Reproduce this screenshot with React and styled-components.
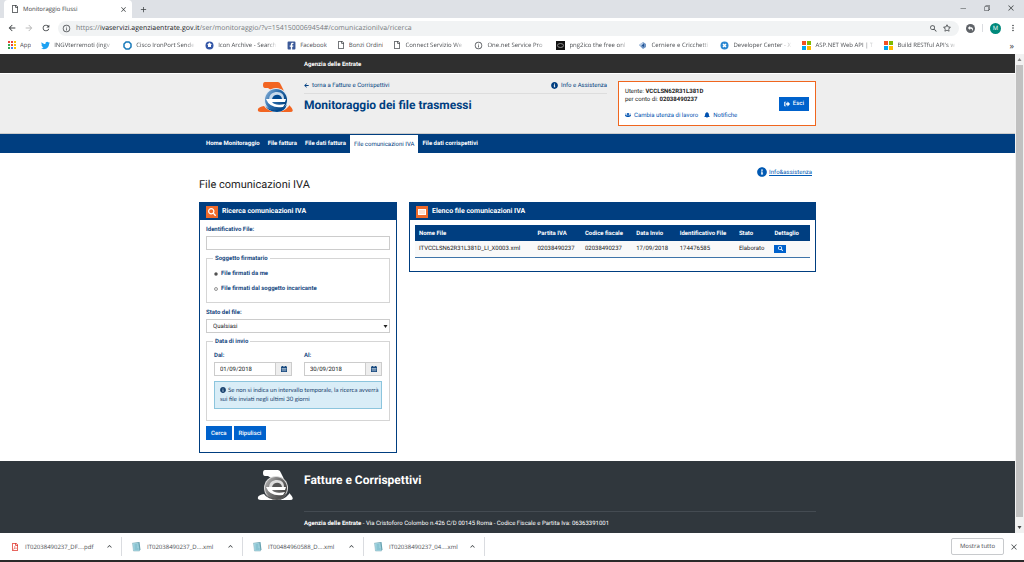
import React, { useState } from 'react';
import styled, { createGlobalStyle } from 'styled-components';
import {
  FaArrowLeft, FaInfoCircle, FaUsers, FaBell, FaSignOutAlt, FaSearch,
  FaTwitter, FaFacebookSquare, FaRegFile, FaRegFilePdf, FaRegStar, FaReply,
} from 'react-icons/fa';
import { VscChromeMinimize, VscChromeRestore, VscChromeClose } from 'react-icons/vsc';
import { MdArrowBack, MdArrowForward, MdRefresh, MdAdd, MdMoreVert, MdInfoOutline, MdSearch, MdKeyboardArrowUp } from 'react-icons/md';

const GlobalStyle = createGlobalStyle`
  * { box-sizing: border-box; }
  body {
    margin: 0;
    font-family: Roboto, "Liberation Sans", sans-serif;
    font-size: 6px;
    line-height: 9px;
    color: #222;
    background: #fff;
    text-rendering: geometricPrecision;
  }
  button, input, select { font: inherit; color: inherit; margin: 0; text-rendering: inherit; }
  a { text-decoration: none; color: inherit; }
  svg { flex: none; display: block; }
`;

const Window = styled.div`
  height: 100vh;
  display: flex;
  flex-direction: column;
  overflow: hidden;
`;

/* ---- browser ---- */

const Chrome = styled.header`
  flex: none;
  font-family: "Open Sans", "Noto Sans", sans-serif;
  color: #4a4d51;
`;

const TabStrip = styled.div`
  height: 18px;
  display: flex;
  align-items: center;
  background: #dee1e6;
  padding: 0 4px;
`;

const Tab = styled.div`
  align-self: stretch;
  width: 128px;
  display: flex;
  align-items: center;
  gap: 4px;
  padding: 0 5px 0 7px;
  background: #fff;
  border-radius: 4px 4px 0 0;
  color: #3c4043;
  font-size: 6px;
`;

const TabTitle = styled.span`
  flex: 1;
`;

const IconButton = styled.button`
  display: flex;
  align-items: center;
  justify-content: center;
  padding: 0;
  border: 0;
  background: none;
  color: ${({ $color }) => $color || '#3c4043'};
  font-size: ${({ $size }) => $size || 9}px;
`;

const NewTab = styled.div`
  flex: 1;
  padding-left: 7px;
  display: flex;
`;

const WindowButtons = styled.div`
  display: flex;
  gap: 16px;
  align-self: flex-start;
  padding: 4px 5px 0 0;
`;

const Toolbar = styled.div`
  height: 19px;
  display: flex;
  align-items: center;
  padding: 1px 6px 0 7px;
  gap: 7px;
`;

const Address = styled.div`
  flex: 1;
  height: 15px;
  display: flex;
  align-items: center;
  gap: 5px;
  padding: 0 8px 0 4px;
  border-radius: 8px;
  background: #f1f3f4;
  font-size: 7px;
`;

const Url = styled.span`
  flex: 1;
  color: #777b80;
  b { font-weight: 400; color: #202124; }
`;

const Divider = styled.span`
  width: 1px;
  height: 8px;
  background: #dadce0;
`;

const Avatar = styled.button`
  width: 11px;
  height: 11px;
  display: flex;
  align-items: center;
  justify-content: center;
  padding: 0;
  border: 0;
  border-radius: 50%;
  background: #00897b;
  color: #fff;
  font-size: 6px;
`;

const ExtensionButton = styled(Avatar)`
  width: 9px;
  height: 9px;
  background: #5f6368;
`;

const Bookmarks = styled.nav`
  height: 17px;
  display: flex;
  align-items: center;
  gap: 10px;
  padding: 0 10px 1px 8px;
  font-size: 6px;
  white-space: nowrap;
`;

const Bookmark = styled.a`
  display: flex;
  align-items: center;
  gap: 4px;
  span {
    overflow: hidden;
    width: ${({ $cut }) => ($cut ? '59px' : 'auto')};
    mask-image: ${({ $cut }) => ($cut ? 'linear-gradient(90deg, #000 85%, transparent)' : 'none')};
  }
`;

const More = styled.button`
  margin-left: auto;
  padding: 0;
  border: 0;
  background: none;
  color: #3c4043;
  font-size: 9px;
`;

const Viewport = styled.div`
  flex: 1;
  min-height: 0;
  display: flex;
`;

const Page = styled.div`
  flex: 1;
  display: flex;
  flex-direction: column;
  overflow: hidden;
`;

const Scrollbar = styled.div`
  width: 9px;
  display: flex;
  flex-direction: column;
  align-items: center;
  justify-content: space-between;
  padding: 3px 0;
  gap: 3px;
  background: #f1f1f1;
`;

const Thumb = styled.div`
  flex: 1;
  width: 7px;
  margin-bottom: 5px;
  background: #c1c1c1;
`;

const Downloads = styled.footer`
  flex: none;
  height: 27px;
  display: flex;
  align-items: center;
  padding: 0 6px 0 1px;
  background: #fff;
  color: #4a4d51;
  font-family: "Open Sans", "Noto Sans", sans-serif;
  font-size: 6px;
`;

const Download = styled.div`
  width: 121px;
  height: 19px;
  display: flex;
  align-items: center;
  gap: 6px;
  padding: 0 7px 0 10px;
  border-right: 1px solid #dadce0;
  span { flex: 1; padding-top: 2px; }
`;

const ShowAll = styled.button`
  margin-left: auto;
  margin-right: 6px;
  height: 17px;
  padding: 0 8px;
  border: 1px solid #c8cacd;
  border-radius: 2px;
  background: #fff;
`;

const Taskbar = styled.div`
  flex: none;
  height: 2px;
  background: #2a2a2a;
`;

/* ---- page ---- */

const Container = styled.div`
  width: 100%;
  max-width: 617px;
  margin: 0 auto;
`;

const TopBar = styled.div`
  height: 19px;
  flex: none;
  background: #2f2f2f;
  color: #fff;
  font-weight: 700;
  line-height: 21px;
  ${Container} { padding-left: 105px; }
`;

const Header = styled.header`
  height: 61px;
  flex: none;
  background: #eee;
  border-top: 1px solid #fff;
  border-bottom: 1px solid #ccc;
  ${Container} {
    display: flex;
    padding-top: 7px;
  }
`;

const LogoCell = styled.div`
  flex: none;
  width: 105px;
  padding-left: 58px;
`;

const Heading = styled.div`
  flex: 1;
  margin-right: 11px;
  color: #003e80;
`;

const HeadLinks = styled.div`
  display: flex;
  justify-content: space-between;
  padding-bottom: 3px;
  border-bottom: 1px solid #ddd;
`;

const IconLink = styled.a`
  display: inline-flex;
  align-items: center;
  gap: 3px;
  color: ${({ $color }) => $color || '#003e80'};
`;

const AppTitle = styled.h2`
  margin: 3px 0 0;
  font-size: 12px;
  line-height: 16px;
  font-weight: 700;
`;

const UserBox = styled.div`
  width: 198px;
  height: 45px;
  display: flex;
  align-items: center;
  justify-content: space-between;
  padding: 0 6px;
  border: 1px solid #f0661e;
  background: #fff;
  p { margin: 0; line-height: 8px; }
`;

const UserLinks = styled.div`
  display: flex;
  gap: 6px;
  margin-top: 7px;
`;

const Button = styled.button`
  height: 14px;
  display: inline-flex;
  align-items: center;
  gap: 3px;
  padding: 0 5px;
  border: 0;
  background: #0062cc;
  color: #fff;
  font-weight: 500;
`;

const Nav = styled.nav`
  height: 19px;
  flex: none;
  background: #003e80;
  ${Container} {
    display: flex;
    height: 100%;
    padding-left: 3px;
  }
`;

const NavLink = styled.a`
  display: flex;
  align-items: center;
  padding: 0 4px;
  margin-top: ${({ $active }) => ($active ? 1 : 0)}px;
  background: ${({ $active }) => ($active ? '#fff' : 'transparent')};
  color: ${({ $active }) => ($active ? '#003e80' : '#fff')};
  font-weight: ${({ $active }) => ($active ? 400 : 700)};
`;

const Main = styled.main`
  flex: 1 0 auto;
  padding: 14px 0 8px;
`;

const Help = styled.a`
  display: flex;
  align-items: center;
  justify-content: flex-end;
  gap: 2px;
  padding-right: 4px;
  color: #0059b3;
  span { text-decoration: underline; }
`;

const PageTitle = styled.h1`
  margin: 0 0 10px;
  font-size: 11px;
  line-height: 15px;
  font-weight: 400;
`;

const Columns = styled.div`
  display: grid;
  grid-template-columns: 198fr 407fr;
  gap: 12px;
  align-items: start;
`;

const Panel = styled.section`
  border: 1px solid #003e80;
`;

const PanelHead = styled.h3`
  height: 17px;
  display: flex;
  align-items: center;
  gap: 4px;
  margin: 0;
  padding: 0 6px;
  background: #003e80;
  color: #fff;
  font-size: 7px;
  font-weight: 700;
`;

const Badge = styled.span`
  width: 12px;
  height: 12px;
  display: flex;
  align-items: center;
  justify-content: center;
  background: #ee6a2b;
  font-size: 8px;
`;

const PanelBody = styled.div`
  padding: ${({ $table }) => ($table ? '5px 5px 13px' : '5px 6px 12px')};
`;

const Label = styled.label`
  display: block;
  margin-bottom: 2px;
  color: #17497f;
  font-weight: 700;
`;

const Input = styled.input`
  width: 100%;
  min-width: 0;
  height: 14px;
  padding: 0 5px;
  border: 1px solid #ccc;
  background: #fff;
`;

const Group = styled.fieldset`
  min-width: 0;
  margin: 4px 0 5px;
  padding: ${({ $pad }) => $pad};
  border: 1px solid #d5d5d5;
  legend {
    padding: 0 2px;
    margin-left: -1px;
    color: #17497f;
    font-weight: 700;
  }
`;

const Radio = styled.label`
  display: flex;
  align-items: center;
  gap: 3px;
  height: 15px;
  color: #17497f;
  font-weight: 700;
  input {
    appearance: none;
    width: 4px;
    height: 4px;
    border: 1px solid #999;
    border-radius: 50%;
    background: #eee;
  }
  input:checked { background: #333; }
`;

const SelectBox = styled.div`
  display: grid;
  align-items: center;
  > * { grid-area: 1 / 1; }
  svg { justify-self: end; margin-right: 2px; pointer-events: none; }
`;

const Select = styled.select`
  appearance: none;
  width: 100%;
  height: 14px;
  padding: 0 6px;
  border: 1px solid #ccc;
  background: #fff;
`;

const Dates = styled.div`
  display: grid;
  grid-template-columns: 1fr 1fr;
  gap: 12px;
`;

const DateField = styled.div`
  display: flex;
`;

const DateButton = styled.button`
  flex: none;
  width: 16px;
  display: flex;
  align-items: center;
  justify-content: center;
  padding: 0;
  border: 1px solid #ccc;
  border-left: 0;
  background: #eee;
  color: #17497f;
`;

const Notice = styled.p`
  margin: 5px 0 0;
  padding: 4px 1px 4px 5px;
  border: 1px solid #8cc5dd;
  background: #d9edf7;
  color: #17406d;
  font-family: Lato, "Liberation Sans", sans-serif;
  svg { display: inline-block; vertical-align: middle; margin-right: 2px; }
`;

const Actions = styled.div`
  display: flex;
  gap: 2px;
`;

const Table = styled.table`
  width: 100%;
  table-layout: fixed;
  border-collapse: collapse;
  border-bottom: 1px solid #3f74a8;
  white-space: nowrap;
  th, td {
    height: 16px;
    padding: 0 4px;
    text-align: left;
  }
  th { background: #003e80; color: #fff; }
  td { background: #f9f9f9; color: #222; }
`;

const Col = styled.col`
  width: ${({ $w }) => $w}%;
`;

const DetailButton = styled.button`
  width: 12px;
  height: 8px;
  display: flex;
  align-items: center;
  justify-content: center;
  padding: 0;
  border: 0;
  background: #0062cc;
  color: #fff;
  font-size: 5px;
`;

const SiteFooter = styled.footer`
  height: 72px;
  flex: none;
  background: #30373d;
  color: #fff;
  ${Container} {
    display: flex;
    padding-top: 8px;
  }
`;

const FooterText = styled.div`
  flex: 1;
  h2 {
    margin: 0;
    padding: 3px 0 23px;
    border-bottom: 1px solid #444b52;
    font-size: 12px;
    line-height: 16px;
  }
  p { margin: 7px 0 0; }
`;

const AgencyLogo = ({ mono }) => {
  const accent = mono ? '#fff' : '#f26522';
  const dark = mono ? '#555' : '#00488f';
  const id = mono ? 'ball-mono' : 'ball-blue';
  return (
    <svg width="36" height="32" viewBox="0 0 36 32">
      <defs>
        <linearGradient id={id} x1="0" y1="0" x2="1" y2="0.6">
          <stop offset="0" stopColor={mono ? '#bbb' : '#8fb4d8'} />
          <stop offset="0.5" stopColor={mono ? '#777' : '#2d6fae'} />
          <stop offset="1" stopColor={mono ? '#444' : '#00407f'} />
        </linearGradient>
      </defs>
      <path d="M8 1H21Q23 1 24 4L27 10Q21 6 14 9L11 7H8Q6 7 6 4T8 1Z" fill={accent} />
      <path d="M7 20V25Q10 30 20 31H4Q0 31 1 28Q2 26 7 25Z" fill={accent} />
      <path d="M32 24L34 26Q38 31 33 31H20Q27 31 32 25Z" fill={accent} />
      <circle cx="19" cy="19" r="12" fill={mono ? '#ddd' : '#e3ebf3'} />
      <circle cx="19" cy="19" r="11" fill={`url(#${id})`} />
      <path d="M12 19C12 13 16 11 20 11C25 11 27 14 27 18Z" fill={mono ? '#ddd' : '#c5d8ea'} />
      <path d="M15 18C16 13 24 12 25 18Z" fill={dark} />
      <path d="M9 18L29 18L28 21H15Q18 25 28 23L26 26Q13 28 9 18Z" fill="#fff" />
      <path d="M8 24Q12 30 20 29Q27 28 30 23Q28 31 20 31Q11 31 8 24Z" fill={dark} />
    </svg>
  );
};

const AppsIcon = () => (
  <svg width="8" height="8" viewBox="0 0 8 8">
    {['#ea4335', '#ea4335', '#fbbc05', '#34a853', '#ea4335', '#fbbc05', '#34a853', '#4285f4', '#fbbc05'].map((c, i) => (
      <rect key={i} x={(i % 3) * 3} y={Math.floor(i / 3) * 3} width="2" height="2" fill={c} />
    ))}
  </svg>
);

const RingIcon = () => (
  <svg width="9" height="9" viewBox="0 0 9 9">
    <path d="M3 1H6L8 3V6L6 8H3L1 6V3Z" fill="#fff" stroke="#1779ba" strokeWidth="1.500" />
  </svg>
);

const ArchiveIcon = () => (
  <svg width="9" height="9" viewBox="0 0 9 9">
    <circle cx="4.500" cy="4.500" r="4" fill="#3558a8" />
    <path d="M4.500 1.500L7 4H6V6H3V4H2Z" fill="#fff" />
  </svg>
);

const PngIcon = () => (
  <svg width="9" height="9" viewBox="0 0 9 9">
    <rect width="9" height="9" fill="#111" />
    <ellipse cx="4.500" cy="4.500" rx="3" ry="2" fill="none" stroke="#888" />
  </svg>
);

const HingeIcon = () => (
  <svg width="9" height="9" viewBox="0 0 9 9">
    <path d="M1 4L5 1L8 3V6L5 8Z" fill="#6e94c4" />
    <path d="M3 4L6 3V6Z" fill="#1d4f91" />
    <path d="M1 4L5 1V3L3 5Z" fill="#b9cde6" />
  </svg>
);

const DevIcon = () => (
  <svg width="9" height="9" viewBox="0 0 9 9">
    <circle cx="4.500" cy="4.500" r="4" fill="#2b87d1" />
    <path d="M3 3L6 6M6 3L3 6" stroke="#fff" strokeWidth="1.500" />
  </svg>
);

const MsIcon = () => (
  <svg width="9" height="9" viewBox="0 0 9 9">
    <path d="M0 0H4V4H0Z" fill="#f25022" />
    <path d="M5 0H9V4H5Z" fill="#7fba00" />
    <path d="M0 5H4V9H0Z" fill="#00a4ef" />
    <path d="M5 5H9V9H5Z" fill="#ffb900" />
  </svg>
);

const XmlIcon = () => (
  <svg width="9" height="10" viewBox="0 0 8 10">
    <path d="M1 1L7 0L8 8L2 9Z" fill="#5f9fae" />
    <path d="M0 1L6 1L7 9L1 9Z" fill="#a5d8e4" stroke="#7fa9b5" strokeWidth="0.500" />
    <path d="M2 3H5M2 5H5M2 7H6" stroke="#5a9db0" strokeWidth="0.700" />
  </svg>
);

const ListIcon = () => (
  <svg width="8" height="8" viewBox="0 0 8 8">
    <path d="M0 1H8V7H0Z" fill="#fff" />
    <path d="M1 3H7M1 5H7" stroke="#f3a680" strokeWidth="0.700" />
  </svg>
);

const CalendarIcon = () => (
  <svg width="6" height="6" viewBox="0 0 12 12">
    <path d="M0 1H12V12H0Z" fill="currentColor" />
    <path d="M1 5H11M1 8H11M4 4V11M8 4V11" stroke="#dfe5ec" />
    <path d="M3 0V2M9 0V2" stroke="currentColor" strokeWidth="2" />
  </svg>
);

const Triangle = ({ up, color = '#222', size = 5 }) => (
  <svg width={size} height={size} viewBox="0 0 5 5">
    <path d={up ? 'M0.500 4L2.500 1L4.500 4Z' : 'M0.500 1L2.500 4L4.500 1Z'} fill={color} />
  </svg>
);

const bookmarks = [
  { icon: <AppsIcon />, text: 'App' },
  { icon: <FaTwitter size={9} color="#1da1f2" />, text: 'INGVterremoti (ingv', cut: true },
  { icon: <RingIcon />, text: 'Cisco IronPort Sende', cut: true },
  { icon: <ArchiveIcon />, text: 'Icon Archive - Search', cut: true },
  { icon: <FaFacebookSquare size={9} color="#3b5998" />, text: 'Facebook' },
  { icon: <FaRegFile size={8} />, text: 'Bonzi Ordini' },
  { icon: <FaRegFile size={8} />, text: 'Connect Servizio We', cut: true },
  { icon: <MdInfoOutline size={9} />, text: 'One.net Service Pro', cut: true },
  { icon: <PngIcon />, text: 'png2ico the free onl', cut: true },
  { icon: <HingeIcon />, text: 'Cerniere e Cricchetti', cut: true },
  { icon: <DevIcon />, text: 'Developer Center - X', cut: true },
  { icon: <MsIcon />, text: 'ASP.NET Web API | T', cut: true },
  { icon: <MsIcon />, text: "Build RESTful API's w", cut: true },
];

const downloads = [
  { icon: <FaRegFilePdf size={8} color="#e0342b" />, name: 'IT02038490237_DF....pdf' },
  { icon: <XmlIcon />, name: 'IT02038490237_D....xml' },
  { icon: <XmlIcon />, name: 'IT00484960588_D....xml' },
  { icon: <XmlIcon />, name: 'IT02038490237_04....xml' },
];

const navItems = ['Home Monitoraggio', 'File fattura', 'File dati fattura', 'File comunicazioni IVA', 'File dati corrispettivi'];

const columns = [
  { title: 'Nome File', width: 30 },
  { title: 'Partita IVA', width: 12 },
  { title: 'Codice fiscale', width: 13 },
  { title: 'Data Invio', width: 11 },
  { title: 'Identificativo File', width: 15 },
  { title: 'Stato', width: 9 },
  { title: 'Dettaglio', width: 10 },
];

const files = [
  ['ITVCCLSN62R31L381D_LI_X0003.xml', '02038490237', '02038490237', '17/09/2018', '174476585', 'Elaborato'],
];

const BrowserChrome = () => (
  <Chrome>
    <TabStrip>
      <Tab>
        <FaRegFile size={8} />
        <TabTitle>Monitoraggio Flussi</TabTitle>
        <IconButton aria-label="Chiudi scheda" $size={7}><VscChromeClose /></IconButton>
      </Tab>
      <NewTab>
        <IconButton aria-label="Nuova scheda"><MdAdd /></IconButton>
      </NewTab>
      <WindowButtons>
        <IconButton aria-label="Riduci" $size={8}><VscChromeMinimize /></IconButton>
        <IconButton aria-label="Ripristina" $size={8}><VscChromeRestore /></IconButton>
        <IconButton aria-label="Chiudi" $size={8}><VscChromeClose /></IconButton>
      </WindowButtons>
    </TabStrip>
    <Toolbar>
      <IconButton aria-label="Indietro" $size={10}><MdArrowBack /></IconButton>
      <IconButton aria-label="Avanti" $size={10} $color="#bbb"><MdArrowForward /></IconButton>
      <IconButton aria-label="Ricarica" $size={10}><MdRefresh /></IconButton>
      <Address>
        <MdInfoOutline size={9} />
        <Url>
          https://<b>ivaservizi.agenziaentrate.gov.it</b>/ser/monitoraggio/?v=1541500069454#/comunicazioniIva/ricerca
        </Url>
        <IconButton aria-label="Zoom"><MdSearch /></IconButton>
        <IconButton aria-label="Preferiti" $size={8}><FaRegStar /></IconButton>
      </Address>
      <ExtensionButton aria-label="Estensione"><FaReply size={5} /></ExtensionButton>
      <Divider />
      <Avatar aria-label="Profilo">M</Avatar>
      <IconButton aria-label="Menu" $size={10}><MdMoreVert /></IconButton>
    </Toolbar>
    <Bookmarks>
      {bookmarks.map((b) => (
        <Bookmark key={b.text} href="#" $cut={b.cut}>
          {b.icon}
          <span>{b.text}</span>
        </Bookmark>
      ))}
      <More aria-label="Altri preferiti">»</More>
    </Bookmarks>
  </Chrome>
);

const SearchPanel = () => {
  const [signer, setSigner] = useState('me');
  const [from, setFrom] = useState('01/09/2018');
  const [to, setTo] = useState('30/09/2018');

  return (
    <Panel>
      <PanelHead><Badge><FaSearch /></Badge>Ricerca comunicazioni IVA</PanelHead>
      <PanelBody>
        <Label htmlFor="file-id">Identificativo File:</Label>
        <Input id="file-id" />
        <Group $pad="3px 7px 6px">
          <legend>Soggetto firmatario</legend>
          <Radio>
            <input type="radio" name="signer" checked={signer === 'me'} onChange={() => setSigner('me')} />
            File firmati da me
          </Radio>
          <Radio>
            <input type="radio" name="signer" checked={signer === 'other'} onChange={() => setSigner('other')} />
            File firmati dal soggetto incaricante
          </Radio>
        </Group>
        <Label htmlFor="file-state">Stato del file:</Label>
        <SelectBox>
          <Select id="file-state"><option>Qualsiasi</option></Select>
          <Triangle />
        </SelectBox>
        <Group $pad="5px 7px 11px">
          <legend>Data di invio</legend>
          <Dates>
            <div>
              <Label htmlFor="from">Dal:</Label>
              <DateField>
                <Input id="from" value={from} onChange={(e) => setFrom(e.target.value)} />
                <DateButton aria-label="Scegli data iniziale"><CalendarIcon /></DateButton>
              </DateField>
            </div>
            <div>
              <Label htmlFor="to">Al:</Label>
              <DateField>
                <Input id="to" value={to} onChange={(e) => setTo(e.target.value)} />
                <DateButton aria-label="Scegli data finale"><CalendarIcon /></DateButton>
              </DateField>
            </div>
          </Dates>
          <Notice>
            <FaInfoCircle />
            Se non si indica un intervallo temporale, la ricerca avverrà sui file inviati negli ultimi 30 giorni
          </Notice>
        </Group>
        <Actions>
          <Button>Cerca</Button>
          <Button>Ripulisci</Button>
        </Actions>
      </PanelBody>
    </Panel>
  );
};

const ResultsPanel = () => (
  <Panel>
    <PanelHead><Badge><ListIcon /></Badge>Elenco file comunicazioni IVA</PanelHead>
    <PanelBody $table>
      <Table>
        <colgroup>
          {columns.map((c) => <Col key={c.title} $w={c.width} />)}
        </colgroup>
        <thead>
          <tr>{columns.map((c) => <th key={c.title}>{c.title}</th>)}</tr>
        </thead>
        <tbody>
          {files.map((row) => (
            <tr key={row[0]}>
              {row.map((cell, i) => <td key={i}>{cell}</td>)}
              <td><DetailButton aria-label="Dettaglio"><FaSearch /></DetailButton></td>
            </tr>
          ))}
        </tbody>
      </Table>
    </PanelBody>
  </Panel>
);

const App = () => (
  <Window>
    <GlobalStyle />
    <BrowserChrome />
    <Viewport>
      <Page>
        <TopBar><Container>Agenzia delle Entrate</Container></TopBar>
        <Header>
          <Container>
            <LogoCell><AgencyLogo /></LogoCell>
            <Heading>
              <HeadLinks>
                <IconLink href="#"><FaArrowLeft size={5} />torna a Fatture e Corrispettivi</IconLink>
                <IconLink href="#"><FaInfoCircle size={7} />Info e Assistenza</IconLink>
              </HeadLinks>
              <AppTitle>Monitoraggio dei file trasmessi</AppTitle>
            </Heading>
            <UserBox>
              <div>
                <p>Utente: <b>VCCLSN62R31L381D</b></p>
                <p>per conto di: <b>02038490237</b></p>
                <UserLinks>
                  <IconLink href="#" $color="#0052b0"><FaUsers />Cambia utenza di lavoro</IconLink>
                  <IconLink href="#" $color="#0052b0"><FaBell />Notifiche</IconLink>
                </UserLinks>
              </div>
              <Button><FaSignOutAlt />Esci</Button>
            </UserBox>
          </Container>
        </Header>
        <Nav>
          <Container>
            {navItems.map((item) => (
              <NavLink key={item} href="#" $active={item === 'File comunicazioni IVA'}>{item}</NavLink>
            ))}
          </Container>
        </Nav>
        <Main>
          <Container>
            <Help href="#"><FaInfoCircle size={10} /><span>Info&amp;assistenza</span></Help>
            <PageTitle>File comunicazioni IVA</PageTitle>
            <Columns>
              <SearchPanel />
              <ResultsPanel />
            </Columns>
          </Container>
        </Main>
        <SiteFooter>
          <Container>
            <LogoCell><AgencyLogo mono /></LogoCell>
            <FooterText>
              <h2>Fatture e Corrispettivi</h2>
              <p><b>Agenzia delle Entrate</b> - Via Cristoforo Colombo n.426 C/D 00145 Roma - Codice Fiscale e Partita Iva: 06363391001</p>
            </FooterText>
          </Container>
        </SiteFooter>
      </Page>
      <Scrollbar>
        <Triangle up color="#888" />
        <Thumb />
        <Triangle color="#444" />
      </Scrollbar>
    </Viewport>
    <Downloads>
      {downloads.map((d) => (
        <Download key={d.name}>
          {d.icon}
          <span>{d.name}</span>
          <IconButton aria-label="Opzioni download"><MdKeyboardArrowUp /></IconButton>
        </Download>
      ))}
      <ShowAll>Mostra tutto</ShowAll>
      <IconButton aria-label="Chiudi barra download" $size={8}><VscChromeClose /></IconButton>
    </Downloads>
    <Taskbar />
  </Window>
);

export default App;
